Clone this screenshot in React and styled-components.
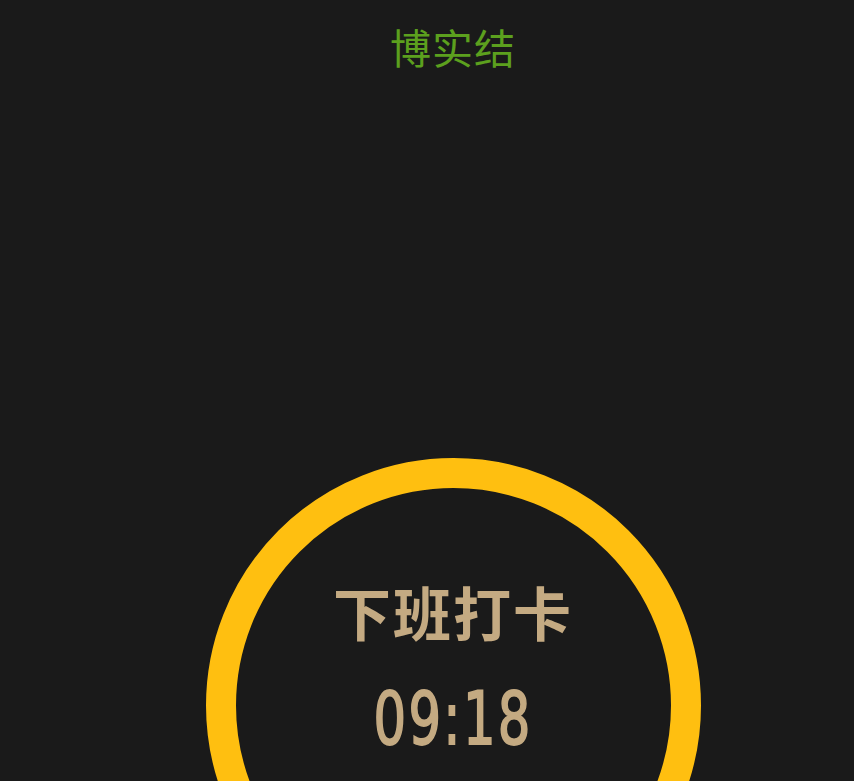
import React from 'react';
import styled, { createGlobalStyle } from 'styled-components';

const GlobalStyle = createGlobalStyle`
  html, body {
    margin: 0;
    padding: 0;
    background: #1a1a1a;
  }
  body {
    font-family: "Noto Sans CJK SC", "Noto Sans", sans-serif;
  }
`;

const Page = styled.div`
  height: 781px;
  overflow: hidden;
  box-sizing: border-box;
  padding-left: 52px;
  display: flex;
  flex-direction: column;
  align-items: center;
  background: #1a1a1a;
`;

const Title = styled.h1`
  margin: 20px 0 0;
  font-size: 41px;
  line-height: 52px;
  font-weight: 400;
  color: #5ca01e;
  letter-spacing: 1px;
`;

const Ring = styled.div`
  margin-top: 386px;
  flex-shrink: 0;
  box-sizing: border-box;
  width: 495px;
  height: 495px;
  border: 30px solid #ffbf10;
  border-radius: 50%;
  display: flex;
  flex-direction: column;
  align-items: center;
  padding-top: 85px;
`;

const Label = styled.div`
  font-size: 58px;
  line-height: 76px;
  font-weight: 700;
  color: #c4aa82;
  letter-spacing: 2px;
`;

const Time = styled.div`
  margin-top: 28px;
  font-family: "DejaVu Sans Condensed", "DejaVu Sans", sans-serif;
  font-size: 73px;
  line-height: 84px;
  font-weight: 400;
  color: #c4aa82;
  -webkit-text-stroke: 1.8px #c4aa82;
  letter-spacing: 3px;
  transform: scaleX(0.78);
`;

const App = () => (
  <Page>
    <GlobalStyle />
    <Title>博实结</Title>
    <Ring>
      <Label>下班打卡</Label>
      <Time>09:18</Time>
    </Ring>
  </Page>
);

export default App;
